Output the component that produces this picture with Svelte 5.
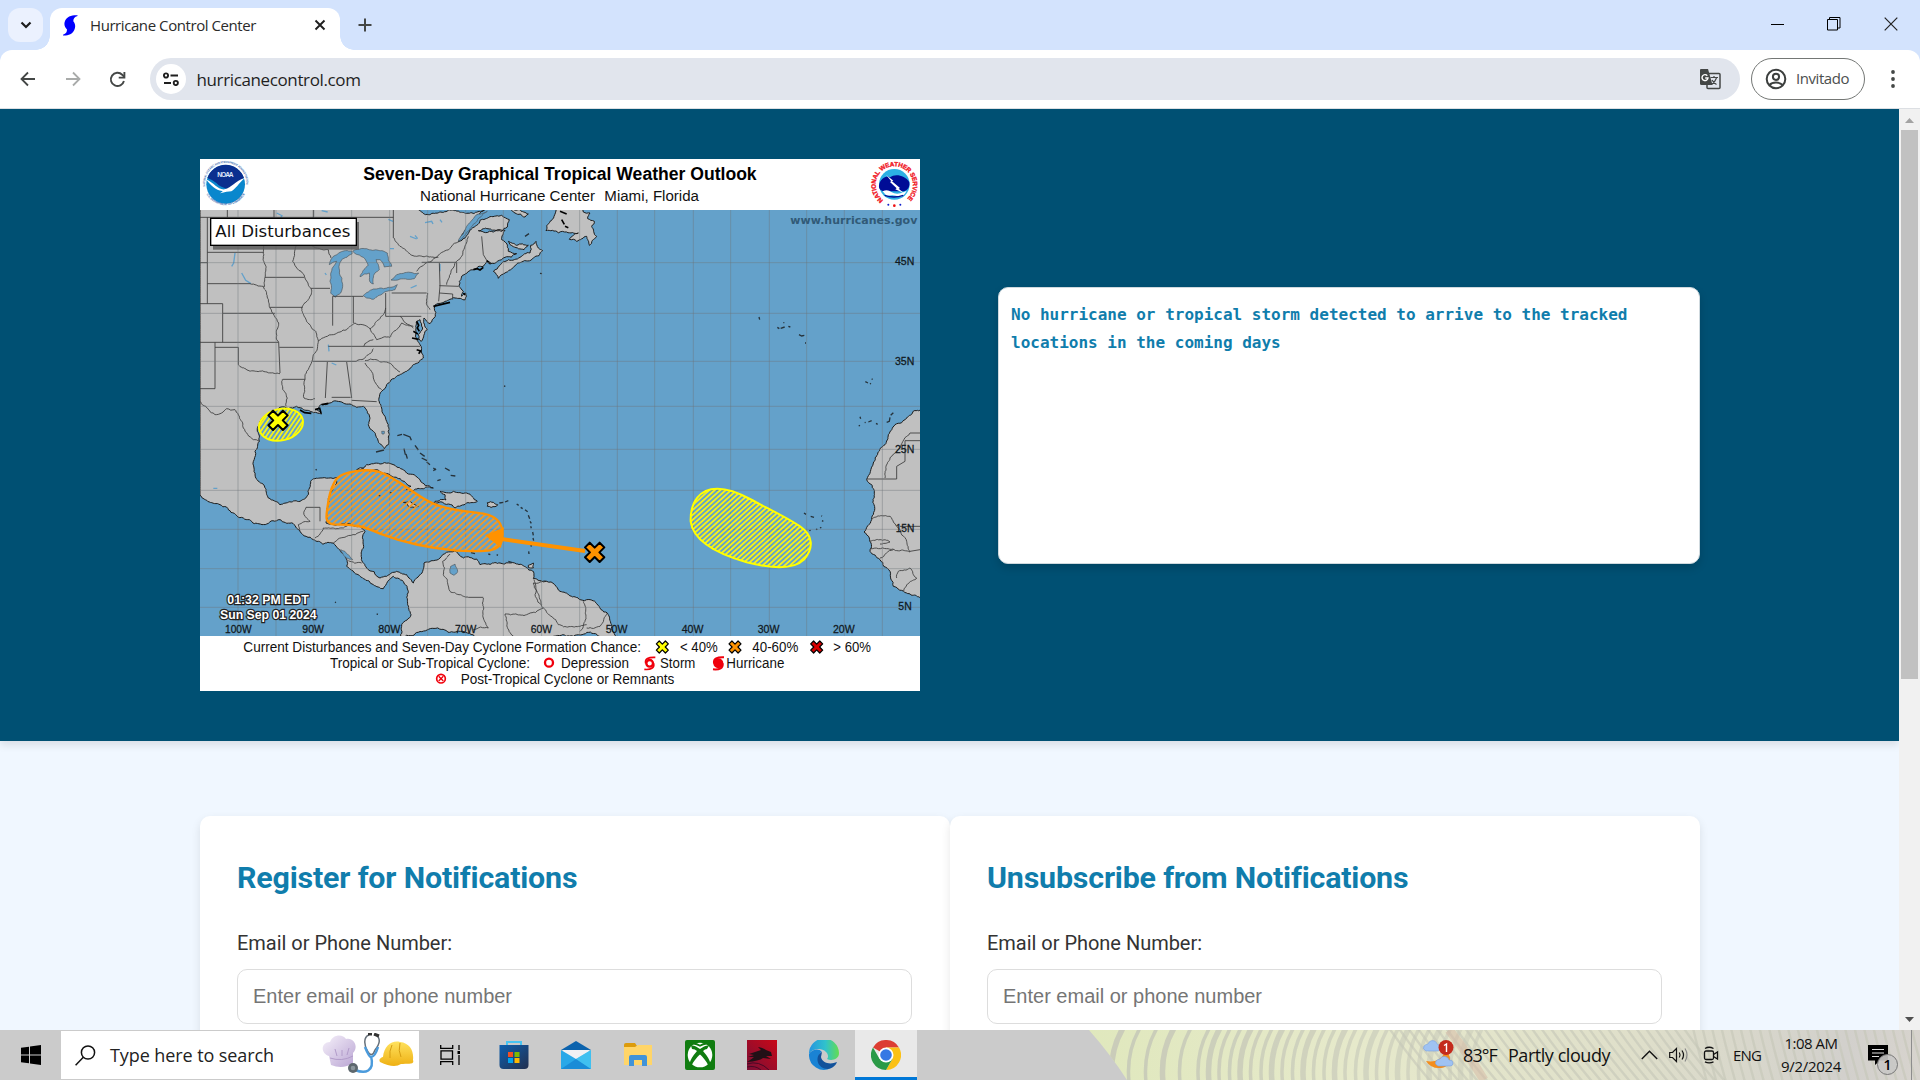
<script>
  // Stretches or tightens letter spacing so a label fills a given width.
  function fit(node, width) {
    const natural = node.getBoundingClientRect().width;
    const count = node.textContent.length;
    node.style.letterSpacing = (width - natural) / count + 'px';
  }

  let seed = 11;
  function rnd() {
    seed = (seed * 16807) % 2147483647;
    return seed / 2147483647 - 0.5;
  }

  // Midpoint displacement gives coasts and rivers their ragged edge.
  function rough(str, closed = true, amp = 0.3) {
    const pts = str.trim().split(/\s+/).map((p) => p.split(',').map(Number));
    if (closed) pts.push(pts[0]);
    const out = [pts[0]];
    const go = (a, b) => {
      const len = Math.hypot(b[0] - a[0], b[1] - a[1]);
      if (len < 7) {
        out.push(b);
        return;
      }
      const edge = (a[0] === 0 && b[0] === 0) || (a[0] === 2160 && b[0] === 2160);
      const o = edge ? 0 : rnd() * len * amp;
      const m = [
        (a[0] + b[0]) / 2 - ((b[1] - a[1]) / len) * o,
        (a[1] + b[1]) / 2 + ((b[0] - a[0]) / len) * o
      ];
      go(a, m);
      go(m, b);
    };
    for (let i = 1; i < pts.length; i++) go(pts[i - 1], pts[i]);
    return 'M' + out.map((p) => p[0].toFixed(1) + ' ' + p[1].toFixed(1)).join('L') + (closed ? 'Z' : '');
  }

  const land = [
    '0,150 862,150 830,172 808,200 790,225 775,250 795,240 815,212 840,187 870,176 905,172 928,185 922,207 905,220 850,212 835,218 880,222 915,217 905,245 922,265 925,280 950,287 915,298 870,318 862,310 850,325 820,335 795,348 778,370 777,385 790,400 785,415 797,405 796,425 765,420 735,430 706,440 703,452 706,475 690,497 680,490 672,480 682,515 664,550 655,530 668,510 660,485 650,490 648,520 652,548 660,560 665,585 670,600 640,620 620,640 590,655 560,680 545,700 537,720 545,750 560,790 568,830 565,860 553,872 535,850 520,820 505,800 508,770 490,745 470,748 450,738 430,735 390,735 362,740 350,755 365,768 340,764 310,755 290,745 240,748 205,765 180,790 172,820 178,850 165,880 162,930 175,970 205,1020 240,1040 300,1030 325,1010 332,970 360,960 412,958 400,990 385,1020 380,1070 378,1095 400,1100 450,1098 480,1105 495,1120 490,1160 485,1200 500,1230 540,1260 560,1255 590,1240 620,1250 640,1275 668,1240 672,1215 700,1208 720,1200 765,1178 790,1200 830,1203 840,1220 900,1215 950,1218 1000,1240 1000,1262 1040,1270 1080,1300 1140,1325 1190,1337 1222,1365 1235,1400 1253,1440 600,1440 605,1400 633,1370 625,1300 612,1275 580,1255 550,1292 520,1280 490,1262 440,1225 435,1190 400,1155 340,1145 300,1120 240,1085 200,1098 130,1080 60,1040 0,1012',
    '2170,752 2120,780 2085,800 2065,830 2055,860 2020,915 2000,965 2015,980 2022,1040 2015,1085 1992,1122 2008,1140 2010,1180 2040,1205 2070,1240 2080,1285 2120,1305 2170,1328',
    '1038,218 1050,190 1062,175 1072,150 1150,150 1150,162 1170,165 1163,182 1183,190 1175,205 1190,235 1168,262 1160,235 1130,250 1108,244 1135,225 1100,222 1075,225',
    '880,340 900,322 925,305 960,298 990,285 992,262 1008,250 1015,270 1028,278 1000,300 965,312 940,328 915,345 895,361',
    '925,250 950,262 985,262 972,275 940,266',
    '930,150 985,168 975,177 945,165',
    '470,935 500,920 540,918 590,927 620,945 660,965 700,990 640,998 620,995 633,985 600,962 570,950 530,935 490,932',
    '720,1000 760,1000 800,1005 832,1030 800,1035 765,1050 745,1038 700,1036 705,1030 738,1026 735,1010',
    '862,1034 880,1033 893,1040 885,1046 862,1045',
    '610,1033 630,1030 655,1045 630,1048',
    '985,1222 1000,1215 1000,1230 985,1228'
  ].map((s) => rough(s));

  const lakes = [
    '388,320 400,295 420,283 455,279 456,288 425,305 418,320 418,345 428,380 422,405 405,418 392,405 390,370 396,332 410,310',
    '458,280 500,272 535,277 562,285 575,325 553,327 540,305 528,305 538,335 525,345 520,378 510,372 508,345 480,356 495,332 505,322 490,298',
    '490,412 520,393 560,390 592,380 585,395 550,405 520,424 500,420',
    '573,366 590,350 630,343 656,345 643,362 600,363',
    '752,1225 765,1218 773,1240 762,1252 750,1245',
    '422,1175 445,1190 458,1205 440,1200',
    '775,250 815,205 840,178 862,160 835,168 800,205',
    '545,820 553,820 552,828 546,828'
  ].map((s) => rough(s, true, 0.2));

  const rivers = [
    '150,377 190,385 210,450 236,495 236,553', '190,262 190,300 195,358 192,388',
    '290,262 278,310 312,350 335,400 305,450 330,500 355,548 340,590 320,640 312,720 345,722',
    '355,548 400,530 440,515 465,495 510,512 550,470 557,450', '510,512 530,545 570,538 605,495 640,505',
    '490,565 520,545', '115,620 170,640 240,647', '247,664 262,720 258,745', '470,608 520,572', '495,615 520,660 545,695',
    '495,608 560,612 600,642', '582,240 600,265 650,295 710,298 778,250', '335,262 385,275 393,300', '650,340 690,312 715,298',
    '805,235 770,310 740,380', '0,730 45,770 80,752 105,755 130,810 160,845 178,850', '318,1048 312,1070 330,1090 295,1100 300,1120',
    '345,1140 370,1110 430,1110 450,1100', '400,1155 440,1135 490,1120', '445,1208 485,1215',
    '750,1188 728,1210 730,1250 750,1300 805,1318', '850,1320 850,1380 865,1410 820,1415', '1002,1265 1005,1310 1030,1350 980,1370 915,1368 940,1434',
    '1025,1340 1000,1275 1040,1270', '1030,1350 1075,1400 1140,1405 1160,1400', '1150,1330 1155,1390 1140,1420', '1222,1365 1200,1405 1160,1410',
    '2055,960 2070,900 2100,870 2130,825', '2015,1082 2070,1075 2095,1110 2120,1150 2130,1182 2060,1172 2010,1172', '2040,1200 2080,1175',
    '2090,1260 2095,1240 2130,1230 2150,1260 2110,1300', '2010,1150 2040,1145 2070,1152 2040,1158', '683,405 680,440 690,455', '600,475 640,510'
  ].map((s) => rough(s, false, 0.25));

  const straight =
    'M0 178H580M82 156V178M22 178V437M0 314H22M22 283H190M22 377H150M0 437H68V553M68 466H225M0 553H236L240 645M45 568H115V620M45 553V692H0M238 568H340M195 358H312M210 448H308M333 391H390M398 415V503M398 415H490M460 415V495M557 405V475H664M575 405H680M338 610H470M385 565H660M382 612L376 720M440 612L455 720M248 664H315M395 718H452M455 727L530 731M718 315L720 383L716 430M665 313H770V345M718 383L775 385M718 405L758 408V425M580 156V240M222 156V178M340 156V180M845 235L850 290L862 310M318 1048H360V1090M805 1318H850M2160 848H2115V910L2090 925V963H2000M2130 825H2160M2100 1105H2160M2130 1180L2160 1175';

  const islets =
    'M592 833l14-4 M610 829l20 8 4 10 M612 872l4 18 M618 888l4 14 M645 862l10 14 M660 885l14 10 M665 900l16 8 M680 912l10 8 M700 930l8 6 M700 938l8-6 M735 930l14 8 M752 952l14 2 M712 968l10-3 M898 1035l12-2 M915 1032l10-4 M950 1038l6 4 M962 1048l6 4 M975 1055l8 6 M985 1072l4 10 M990 1090l4 6 M992 1105l2 6 M998 1122l2 10 M999 1140l2 8 M993 1160l1 6 M986 1180l1 8 M347 934l3 3 M528 882l24-6 M536 1012l5 2 M570 1003l5 2 M405 1332l3 2 M530 1368l4 1 M1020 346l6 1 M912 684l4 1 M975 235l12-8 M813 1184l12 3 M865 1188l6 2 M890 1190l4 2 M925 1210l12 4 M1677 477l2 8 M1732 508l6 4 M1742 511l12 -4 M1750 494h3 M1765 505l6 2 M1797 530l8 4 8-2 M1815 555h3 M1996 671l8 4 M2010 678l3-2 M2015 663l3 1 M1812 1065l6 4 M1832 1075l10 3 M1864 1073l2 2 M1866 1088l4 2 M1828 1118l4-1 M1848 1113l4 2 M1860 1110l4-2 M1980 776l2 6 M1976 804l4-2 M1994 793l3 1 M2005 792l10-4 M2028 796l5 3 M2060 793l8-3 2-12 M2072 772l8-8';

  const meridians = [114, 228, 342, 455, 569, 683, 797, 910, 1025, 1139, 1252, 1364, 1480, 1592, 1708, 1820, 1933, 2047];
  const parallels = [314, 466, 610, 745, 874, 997, 1114, 1232, 1348];
  const lons = [['100W', 75, 80], ['90W', 307, 65], ['80W', 535, 66], ['70W', 765, 64], ['60W', 992, 64], ['50W', 1217, 65], ['40W', 1445, 65], ['30W', 1673, 65], ['20W', 1899, 65]];
  const lats = [['45N', 2085, 322, 58], ['35N', 2085, 620, 58], ['25N', 2085, 884, 58], ['15N', 2087, 1123, 56], ['5N', 2095, 1355, 40]];
  const cross = 'M-10-31H10V-10H31V10H10V31H-10V10H-31V-10H-10Z';
  const marks = [['#ff0', 234, 787, 1], ['#ff9200', 1184, 1183, 1], ['#ff0', 1387, 1467, 0.62], ['#ff9200', 1605, 1467, 0.62], ['#d80000', 1850, 1467, 0.62]];
  const legend = [
    ['Current Disturbances and Seven-Day Cyclone Formation Chance:', 130, 1482, 1193], ['< 40%', 1440, 1482, 113], ['40-60%', 1657, 1482, 138], ['> 60%', 1900, 1482, 113],
    ['Tropical or Sub-Tropical Cyclone:', 390, 1530, 600], ['Depression', 1083, 1530, 204], ['Storm', 1380, 1530, 106], ['Hurricane', 1579, 1530, 174],
    ['Post-Tropical Cyclone or Remnants', 782, 1578, 641]
  ];

  // Feathered wallpaper seen through the taskbar.
  const feathers = [];
  for (let i = 0; i < 32; i++) {
    const x = 20 + i * (i < 5 ? 17 : 10.5) + (i < 5 ? 0 : 34);
    feathers.push({ d: `M${x + 14} -2Q${x} 22 ${x + 3} 52`, w: i % 3 ? 3.5 : 5.5, o: 0.85 - i * 0.012 });
  }
  for (let i = 0; i < 58; i++) {
    const x = 300 + i * 9.5;
    const lean = i < 32 ? 42 : 14;
    feathers.push({ d: `M${x} -2Q${x + lean * 0.4} 22 ${x + lean} 52`, w: 2.4, o: 0.6 });
  }

  const forms = ['Register for Notifications', 'Unsubscribe from Notifications'];
  const headWidths = [340, 421];
</script>

<div class="screen">
  <div class="tabs">
    <div class="drop"><svg width="12" height="8" viewBox="0 0 12 8"><path d="M1.5 1.5 6 6l4.500-4.500" fill="none" stroke="#1c1c1c" stroke-width="2.200" /></svg></div>
    <div class="tab">
      <svg class="fav" width="15" height="21" viewBox="0 0 15 21"><path d="M14.500.2C9-.1 3.500 1.500 2 6c-1.500 4 0 6.500 2 8.500C4 17 3 18.800 0 19.700v.8c5 .3 9.500-1.500 11.300-5.500C13 11 12 8.500 10.300 6.300 10.300 3.500 11.500 1.800 14.500 1Z" fill="#00f" /></svg>
      <span class="tabname" use:fit={166}>Hurricane Control Center</span>
      <svg class="close" width="12" height="12" viewBox="0 0 12 12"><path d="m1.500 1.500 9 9m0-9-9 9" stroke="#1f1f1f" stroke-width="1.900" /></svg>
    </div>
    <svg class="plus" width="14" height="14" viewBox="0 0 14 14"><path d="M7 .5v13M.5 7h13" stroke="#444746" stroke-width="2" /></svg>
    <div class="winctl">
      <svg width="13" height="14" viewBox="0 0 13 14"><path d="M0 7.500h13" stroke="#000" /></svg>
      <svg width="14" height="14" viewBox="0 0 14 14"><path d="M.5 2.500h10v10.500H.5zM2.500 2.500V.5H13v10.500h-2.500" fill="none" stroke="#000" /></svg>
      <svg width="14" height="14" viewBox="0 0 14 14"><path d="m.7.7 12.600 12.600m0-12.600L.7 13.300" stroke="#222" stroke-width="1.200" /></svg>
    </div>
  </div>

  <div class="toolwrap">
    <div class="toolbar">
      <svg width="16" height="16" viewBox="0 0 16 16"><path d="M15 8H2M8 1.500 1.500 8 8 14.500" fill="none" stroke="#444746" stroke-width="1.800" /></svg>
      <svg class="fwd" width="16" height="16" viewBox="0 0 16 16"><path d="M1 8h13M8 1.500 14.500 8 8 14.500" fill="none" stroke="#a9abaa" stroke-width="1.800" /></svg>
      <svg class="reload" width="17" height="17" viewBox="0 0 18 18"><path d="M15.800 10.500A7 7 0 1 1 14 4l2.200 2.200" fill="none" stroke="#444746" stroke-width="2" /><path d="M16.300 1v6h-6" fill="none" stroke="#444746" stroke-width="2" /></svg>
      <div class="omni">
        <div class="site"><svg width="16" height="14" viewBox="0 0 16 14" fill="none" stroke="#1f1f1f" stroke-width="1.900"><circle cx="3" cy="3.500" r="2.100" /><path d="M7.500 3.500H15M1 11h7" /><circle cx="12.800" cy="11" r="2.100" /></svg></div>
        <span class="url" use:fit={164}>hurricanecontrol.com</span>
        <svg class="translate" width="22" height="22" viewBox="0 0 22 22"><rect x="8" y="5.500" width="13" height="15" rx="1" fill="#e1e5ed" stroke="#444746" stroke-width="1.500" /><path d="M1.500 1H9l4.500 16H2.500A1.500 1.500 0 0 1 1 15.500V2Z" fill="#444746" /><path d="M11.500 9.500H19M15 8v2m2.500 0c-1 3-3 5-5 6.500M13 12c1 2 3 3.500 4.500 4.500" fill="none" stroke="#444746" stroke-width="1.200" /><path d="M8.300 7.700A3 3 0 1 0 9 10H6.200" fill="none" stroke="#fff" stroke-width="1.400" /></svg>
      </div>
      <div class="profile">
        <svg width="22" height="22" viewBox="0 0 22 22" fill="none" stroke="#3c3f3e" stroke-width="2"><circle cx="11" cy="11" r="9.300" /><circle cx="11" cy="8.800" r="3.100" /><path d="M4.500 17c3-3.300 10-3.300 13 0" /></svg>
        <span use:fit={53}>Invitado</span>
      </div>
      <svg class="dots" width="4" height="18" viewBox="0 0 4 18" fill="#444746"><circle cx="2" cy="2" r="1.900" /><circle cx="2" cy="9" r="1.900" /><circle cx="2" cy="16" r="1.900" /></svg>
    </div>
  </div>

  <div class="view">
    <main>
      <section class="hero">
        <svg class="map" width="720" height="532" viewBox="0 3 2160 1596">
          <defs>
            <pattern id="hy" width="11" height="11" patternUnits="userSpaceOnUse" patternTransform="rotate(48)"><rect width="5.500" height="11" fill="#f4f21a" /></pattern>
            <pattern id="ho" width="13" height="13" patternUnits="userSpaceOnUse" patternTransform="rotate(48)"><rect width="5.500" height="13" fill="#f29a28" /></pattern>
            <clipPath id="sea"><rect x="0" y="156" width="2160" height="1278" /></clipPath>
            <path id="ringA" d="M16 88A62 62 0 1 1 138 88" />
            <path id="ringB" d="M13 92A66 66 0 0 0 141 92" />
            <path id="ringC" d="M2050 126A56 56 0 1 1 2116 126" />
          </defs>
          <rect width="2160" height="1602" fill="#fff" />
          <g clip-path="url(#sea)">
            <rect y="156" width="2160" height="1278" fill="#64a1ca" />
            {#each land as d}<path {d} fill="#c0c0c0" stroke="#1c1c1c" stroke-width="3" />{/each}
            {#each lakes as d}<path {d} fill="#64a1ca" stroke="#4b565d" stroke-width="2" />{/each}
            <path d="M230 165l16 8-6 10M365 158l18 4M565 184l14 6M675 194l20-4 4 8M720 185l6 8M630 235l20 8M645 232l8 10M105 285l-4 30-6 10M125 345l12 22 16 10M375 345l4 6M570 272h12M720 318v22M385 560l2 20M395 615l14 6M40 991h12M632 390l18-8M780 158l18 4" fill="none" stroke="#64a1ca" stroke-width="4" />
            <g fill="none" stroke="#3c3c3c" stroke-width="2.600"><path d={straight} />{#each rivers as d}<path {d} />{/each}</g>
            <path d={islets} stroke="#26323a" stroke-width="4" fill="none" />
            <path d="M820 335l12-3 8 4 10-8M790 405l6 6M700 445l50-12M650 490l6 12-4 8 6 10M640 520l14 8M636 540l20 4M650 575l12 4-6 8M300 756l14 8 20 2M345 755l14-4 4 14M365 740l20-4M860 308l12 8M1080 160l20 8M1085 185l8 14M1095 205l10 4" fill="none" stroke="#000" stroke-width="5" />
            <g stroke="#6e7478" stroke-opacity=".5" stroke-width="2.600">
              {#each meridians as x}<path d="M{x} 156V1434" />{/each}
              {#each parallels as y}<path d="M0 {y}H2160" />{/each}
            </g>
            <ellipse cx="243" cy="800" rx="67" ry="47" transform="rotate(-14 243 800)" fill="url(#hy)" stroke="#ff0" stroke-width="6" />
            <path d="M410 962C432 938 500 932 535 941C590 957 640 1010 700 1037C750 1059 800 1059 850 1067C900 1075 915 1110 905 1150C895 1185 850 1180 770 1178C680 1170 600 1150 540 1127C490 1104 470 1100 400 1099C370 1094 380 1070 385 1030C390 1000 395 982 410 962Z" fill="url(#ho)" stroke="#ff9200" stroke-width="7" />
            <path d="M890 1141 1155 1179" stroke="#ff9200" stroke-width="12" />
            <path d="M855 1132 912 1108 903 1170Z" fill="#ff9200" />
            <path d="M1553 992C1500 991 1470 1031 1472 1091C1480 1151 1560 1190 1640 1213C1720 1233 1782 1235 1812 1205C1842 1170 1840 1132 1800 1105C1760 1078 1700 1050 1650 1023C1610 1001 1580 992 1553 992Z" fill="url(#hy)" stroke="#ff0" stroke-width="6" />
            <text class="sans" x="1771" y="199" textLength="381" lengthAdjust="spacingAndGlyphs" font-size="34" font-weight="700" fill="#315a77">www.hurricanes.gov</text>
            <g class="arial axis" font-size="35">
              {#each lats as [t, x, y, w]}<text {x} {y} textLength={w} lengthAdjust="spacingAndGlyphs">{t}</text>{/each}
              {#each lons as [t, x, w]}<text {x} y="1424" textLength={w} lengthAdjust="spacingAndGlyphs">{t}</text>{/each}
            </g>
            <g class="arial stamp" font-size="38" font-weight="700"><text x="82" y="1339" textLength="244" lengthAdjust="spacingAndGlyphs">01:32 PM EDT</text><text x="60" y="1383" textLength="290" lengthAdjust="spacingAndGlyphs">Sun Sep 01 2024</text></g>
            <rect x="39" y="192" width="438" height="83" fill="#5c5c5c" opacity=".85" />
            <rect x="32" y="181" width="437" height="81" fill="#fff" stroke="#000" stroke-width="4" />
            <text class="sans" x="46" y="236" textLength="405" lengthAdjust="spacingAndGlyphs" font-size="50" fill="#111">All Disturbances</text>
          </g>
          <g class="arial">
            <text x="490" y="67" textLength="1180" lengthAdjust="spacingAndGlyphs" font-size="54" font-weight="700">Seven-Day Graphical Tropical Weather Outlook</text>
            <text x="660" y="128" textLength="525" lengthAdjust="spacingAndGlyphs" font-size="46" fill="#111">National Hurricane Center</text>
            <text x="1213" y="128" textLength="284" lengthAdjust="spacingAndGlyphs" font-size="46" fill="#111">Miami, Florida</text>
            {#each legend as [t, x, y, w]}<text {x} y={y - 1} textLength={w} lengthAdjust="spacingAndGlyphs" font-size="42" fill="#111">{t}</text>{/each}
          </g>
          {#each marks as [c, x, y, s]}<path d={cross} transform="translate({x} {y}) rotate(45) scale({s})" fill={c} stroke="#000" stroke-width={s < 1 ? 6 : 6} stroke-linejoin="round" />{/each}
          <circle cx="1047" cy="1514" r="12" fill="none" stroke="#f0000c" stroke-width="7" />
          <circle cx="723" cy="1562" r="13" fill="none" stroke="#f0000c" stroke-width="5" />
          <path d="m716 1555 14 14m0-14-14 14" stroke="#f0000c" stroke-width="4" />
          <circle cx="1349" cy="1516" r="10" fill="none" stroke="#f0000c" stroke-width="7" />
          <path d="M1337 1516C1334 1502 1345 1497 1366 1498M1361 1516C1364 1530 1353 1536 1333 1534" fill="none" stroke="#f0000c" stroke-width="5" />
          <circle cx="1555" cy="1516" r="15" fill="#f0000c" />
          <path d="M1542 1516C1540 1502 1551 1497 1572 1498M1568 1516C1570 1530 1559 1536 1539 1534" fill="none" stroke="#f0000c" stroke-width="6" />

          <g>
            <circle cx="77" cy="79" r="58" fill="#0a87cd" />
            <path d="M22 60A58 58 0 0 1 132 60C112 72 100 84 88 95Q60 88 50 76Q40 66 22 60Z" fill="#0b2f8f" />
            <path d="M18 64C45 76 52 96 74 94C95 90 105 68 134 60C116 76 108 92 94 100Q82 100 60 106Q72 98 66 99C48 98 30 80 18 64Z" fill="#fff" />
            <text class="arial" x="52" y="57" textLength="49" font-size="20" font-weight="700" fill="#dfe8fa">NOAA</text>
            <text class="arial" font-size="9" font-weight="700" fill="#3768ad"><textPath href="#ringA" startOffset="3" textLength="205" lengthAdjust="spacingAndGlyphs">NATIONAL OCEANIC AND ATMOSPHERIC ADMINISTRATION</textPath></text>
            <text class="arial" font-size="9" font-weight="700" fill="#3768ad"><textPath href="#ringB" startOffset="18" textLength="140" lengthAdjust="spacingAndGlyphs">U.S. DEPARTMENT OF COMMERCE</textPath></text>
          </g>
          <g>
            <circle cx="2083" cy="79" r="46" fill="#2cb0e4" />
            <path d="M2037 82C2040 62 2060 50 2070 58C2085 46 2115 52 2128 72C2130 86 2124 96 2112 100H2050C2040 96 2036 92 2037 82Z" fill="#000c96" />
            <path d="M2058 50 2080 68 2076 70 2100 90 2096 92 2112 106 2086 94 2090 91 2070 72 2074 70Z" fill="#fff" />
            <path d="M2048 100Q2062 92 2074 102Q2090 112 2112 102L2120 98Q2112 116 2098 116Q2080 108 2060 114Z" fill="#fff" /><path d="M2054 112Q2082 122 2110 112" stroke="#000c96" stroke-width="4" fill="none" />
            <text class="arial" font-size="19" font-weight="700" fill="#f0141e" stroke="#f0141e"><textPath href="#ringC" textLength="274">NATIONAL WEATHER SERVICE</textPath></text>
            <circle cx="2065" cy="140" r="3" fill="#12c" /><circle cx="2083" cy="143" r="4" fill="#e11" /><circle cx="2101" cy="140" r="3" fill="#12c" />
          </g>
        </svg>
        <div class="notice">No hurricane or tropical storm detected to arrive to the tracked locations in the coming days</div>
      </section>
      <section class="forms">
        {#each forms as title, i}
          <form>
            <h2><span use:fit={headWidths[i]}>{title}</span></h2>
            <label for="contact{i}"><span use:fit={215}>Email or Phone Number:</span></label>
            <input id="contact{i}" placeholder="Enter email or phone number" />
          </form>
        {/each}
      </section>
    </main>
    <div class="scroll">
      <svg width="21" height="21" viewBox="0 0 21 21"><path d="m6 14 4.500-5 4.500 5Z" fill="#a3a3a3" /></svg>
      <div class="thumb"></div>
      <svg width="21" height="21" viewBox="0 0 21 21"><path d="m6 8 4.500 5L15 8Z" fill="#505050" /></svg>
    </div>
  </div>

  <div class="taskbar">
    <div class="start"><svg width="20" height="20" viewBox="0 0 20 20"><path d="M0 2.800 8 1.700v7.800H0zM9 1.500 20 0v9.500H9zM0 10.500h8v7.800L0 17.200zM9 10.500h11V20L9 18.500z" /></svg></div>
    <div class="search">
      <svg width="21" height="21" viewBox="0 0 21 21" fill="none" stroke="#111" stroke-width="1.500"><circle cx="13" cy="7.500" r="6.600" /><path d="M8.300 12.300.6 20.200" /></svg>
      <span use:fit={164}>Type here to search</span>
      <svg class="jobs" width="92" height="44" viewBox="0 0 92 44">
        <defs><linearGradient id="hat" x2="1" y2="1"><stop stop-color="#f6f1fa" /><stop offset="1" stop-color="#b9a4d3" /></linearGradient><linearGradient id="helm" x2="0" y2="1"><stop stop-color="#ffe25e" /><stop offset="1" stop-color="#eeb013" /></linearGradient></defs>
        <path d="M9 32 7 23C-2 20-1 9 8 9C11 1 21 1 24 6C32 4 37 14 31 20L31 30Q21 37 9 32Z" fill="url(#hat)" /><path d="M8 25q12 4 23-2M13 16l2 7M20 17v6M27 15l-2 7" stroke="#b29cca" fill="none" />
        <path d="M47 2C41 4 42 13 46 19Q50 25 53 17Q61 7 54 2" fill="none" stroke="#66707a" stroke-width="1.500" /><path d="M43 14Q47 24 49 24Q53 24 56 14M49 23C53 39 43 41 33 37" fill="none" stroke="#4b9bdc" stroke-width="2.500" /><path d="M46 1h4m2 0 5 2" stroke="#333" stroke-width="3" /><circle cx="31" cy="35" r="5" fill="#5d676d" /><circle cx="31" cy="35" r="2.300" fill="#8b969c" />
        <path d="M58 29C56 26 60 24 61 24C62 13 70 7 78 9C88 10 92 18 91 27C93 32 85 30 79 31Q72 36 58 29Z" fill="url(#helm)" /><path d="M70 12q-3 6-2 13M78 10q-2 8 1 14" fill="none" stroke="#d59d12" />
      </svg>
    </div>
    <div class="cell task"><svg width="20" height="20" viewBox="0 0 20 20" fill="none" stroke="#000" stroke-width="1.300"><path d="M.7 0v3.300h12V0M.7 20v-3.300h12V20M1 5.800h11.500v8.400H1zM19 0v5M19 10v10" /><path d="M17.500 6h3v3h-3z" fill="#000" stroke="none" /></svg></div>
    <div class="cell"><svg width="30" height="30" viewBox="0 0 30 30"><defs><linearGradient id="st" x2="1" y2="1"><stop stop-color="#0d5fae" /><stop offset="1" stop-color="#23304f" /></linearGradient></defs><path d="M8 6V2h14v4" fill="none" stroke="#48c4f2" stroke-width="2" /><path d="M.5 5h29v20q0 4-4 4h-21q-4 0-4-4Z" fill="url(#st)" /><path d="M9 12h5v5H9z" fill="#f25022" /><path d="M15.500 12h5v5h-5z" fill="#7fba00" /><path d="M9 18h5v5H9z" fill="#00a4ef" /><path d="M15.500 18h5v5h-5z" fill="#ffb900" /></svg></div>
    <div class="cell"><svg width="30" height="30" viewBox="0 0 30 30"><path d="M0 10 15 1l15 9H0Z" fill="#0c63ad" /><path d="M2 10h26v10H2z" fill="#f1f1f4" /><path d="M0 10v19h30V10L15 19Z" fill="#2aa8e8" /><path d="m0 29 15-10 15 10Z" fill="#1683d2" opacity=".75" /><path d="M30 10 15 19l15 10Z" fill="#50d0f5" opacity=".6" /></svg></div>
    <div class="cell"><svg width="30" height="30" viewBox="0 0 30 30"><path d="M1 5q0-2 2-2h9l2 3v4H1Z" fill="#dc9b0b" /><path d="M1 7h11l3-2h14v20H1Z" fill="#ffd568" /><path d="M6 26V17q0-2 2-2h14q2 0 2 2v9h-5v-6h-8v6Z" fill="#4193d8" /></svg></div>
    <div class="cell"><svg width="30" height="30" viewBox="0 0 30 30"><rect width="30" height="30" rx="2" fill="#107c10" /><circle cx="15" cy="15" r="12.300" fill="#fff" /><path d="M6 5.500C9 5 12 7 15 9C18 7 21 5 24 5.500L22 9Q20 9 18 11Q25 19 25.500 24L23.500 26C22 22 18 17 15 14.500C12 17 8 22 6.500 26L4.500 24Q5 19 12 11Q10 9 7 9Z" fill="#107c10" /><path d="M8.500 3.500Q12 4 15 5.700Q18 4 21.500 3.500" fill="none" stroke="#107c10" stroke-width="1.800" /></svg></div>
    <div class="cell"><svg width="30" height="30" viewBox="0 0 30 30"><defs><linearGradient id="dr" x1="1" x2="0" y2="1"><stop stop-color="#c80818" /><stop offset="1" stop-color="#7b0f36" /></linearGradient></defs><path d="M0 0h30v30H0z" fill="url(#dr)" /><path d="M2 14Q8 12 14 10L11 7Q17 8 19 10L24 12 25 16 19 16 24 19 16 18Q12 21 0 22Q5 19 7 17L1 17 7 15Z" fill="#211016" /><path d="M0 24Q12 20 22 30M0 27Q8 25 14 30" fill="none" stroke="#470a25" /></svg></div>
    <div class="cell"><svg width="30" height="30" viewBox="0 0 30 30"><defs><linearGradient id="eg"><stop stop-color="#2595e0" /><stop offset=".55" stop-color="#30c2cc" /><stop offset="1" stop-color="#64dd50" /></linearGradient></defs><path d="M0 14A15 15 0 0 1 30 13C30 20 22 21 18 19C19 18 20 15 17 12C12 7 3 9 0 14Z" fill="url(#eg)" /><path d="M0 14C3 9 10 8 13 12C9 12 8 25 22 28A15 15 0 0 1 0 14Z" fill="#1a83d4" /><path d="M13 12C5 16 8 29 19 29C24 28 27 25 28 22C21 25 13 23 12 17Z" fill="#12529b" /></svg></div>
    <div class="cell active"><svg width="30" height="30" viewBox="0 0 30 30"><path d="M15 15 2 7.500A15 15 0 0 1 28 7.500H15Z" fill="#dc3e32" /><path d="M15 15V7.500h13A15 15 0 0 1 15 30l6.500-11.200Z" fill="#fbc116" /><path d="M15 15 21.500 18.800 15 30A15 15 0 0 1 2 7.500L8.500 18.800Z" fill="#2b9a47" /><circle cx="15" cy="15" r="7.500" fill="#fff" /><circle cx="15" cy="15" r="5.800" fill="#3678e4" /></svg></div>
    <div class="tray">
      <svg class="paper" width="840" height="50" viewBox="0 0 840 50">
        <defs><linearGradient id="pg"><stop stop-color="#e0e8bd" /><stop offset=".32" stop-color="#e6e9cb" /><stop offset=".65" stop-color="#dfdfca" /><stop offset=".9" stop-color="#d2d0cc" /><stop offset="1" stop-color="#d8d4ce" /></linearGradient><clipPath id="pc"><path d="M0 0H840V50H38Q22 25 0 0Z" /></clipPath></defs>
        <g clip-path="url(#pc)">
          <rect width="840" height="50" fill="url(#pg)" />
          {#each feathers as f}<path d={f.d} fill="none" stroke="#c5c7b8" stroke-width={f.w} stroke-opacity={f.o} />{/each}
          <path d="M360 0Q380 25 395 50" stroke="#d6b8a4" stroke-width="9" opacity=".5" fill="none" />
        </g>
      </svg>
      <div class="weather">
        <svg width="31" height="30" viewBox="0 0 31 30"><path d="M3 21C13 23 20 18 22 11C30 15 28 27 18 28Q8 29 3 21Z" fill="#f48e1d" /><path d="M3 11Q-1 9 1 6Q3 4 5 4C7-1 13 0 14 4Q18 5 18 8 17 11 15 11ZM15 26q-4-2-2-5 2-2 4-2c2-4 8-3 9 1q4 0 4 3 0 3-3 3Z" fill="#9fc2f2" stroke="#7aa3df" stroke-width=".6" /><circle cx="23" cy="7.500" r="7.500" fill="#c42b1c" /><path d="M21 5.500 23.500 4v8" fill="none" stroke="#fff" stroke-width="1.400" /></svg>
        <span class="deg" use:fit={34}>83°F</span><span use:fit={102}>Partly cloudy</span>
      </div>
      <svg class="chev" width="17" height="10" viewBox="0 0 17 10"><path d="m.8 9 7.700-7.700L16.200 9" fill="none" stroke="#111" stroke-width="1.400" /></svg>
      <svg class="vol" width="20" height="16" viewBox="0 0 20 16" fill="none" stroke="#111" stroke-width="1.200"><path d="M.7 5.500h2.800L7.500 1.500v13l-4-4H.7zM10.300 5.500q1.500 2.500 0 5M13 3.500q3 4.500 0 9" /><path d="M16 1.500q4 6.500 0 13" stroke="#888" /></svg>
      <svg class="meet" width="16" height="18" viewBox="0 0 16 18" fill="none" stroke="#111" stroke-width="1.300"><rect x="1.500" y="5" width="9" height="8.500" rx="1.500" /><path d="m10.500 8.500 4-2.500v7l-4-2.500M2 2.500Q6 0 10.500 2.500M2 15.800q4 2 8.500 0" /></svg>
      <span class="lang"><span use:fit={28}>ENG</span></span>
      <div class="clock"><span use:fit={53}>1:08 AM</span><span use:fit={60}>9/2/2024</span></div>
      <div class="note">
        <svg width="31" height="32" viewBox="0 0 31 32"><path d="M0 0h20v15.500H12L7 20v-4.500H0z" /><path d="M4 4.500h12M4 8h12M4 11.500h7" stroke="#ddd" stroke-width="1.200" /><circle cx="19.500" cy="19.500" r="10" fill="#c9c8c6" fill-opacity=".9" stroke="#777" /><text class="segoe" x="15.500" y="25" font-size="14" font-weight="600">1</text></svg>
      </div>
      <div class="peek"></div>
    </div>
  </div>
</div>

<style>
  :global(body) { margin: 0; overflow: hidden; }
  * { box-sizing: border-box; }
  svg { display: block; flex: none; }
  span { display: inline-block; white-space: pre; }
  .screen { width: 1920px; height: 1080px; display: flex; flex-direction: column; overflow: hidden; background: #fff; font-family: 'Open Sans', sans-serif; }
  .tabs { height: 50px; flex: none; background: #d3e3fd; display: flex; align-items: center; padding-left: 8px; }
  .drop { width: 35px; height: 34px; border-radius: 12px; background: #ebf1fe; display: flex; align-items: center; justify-content: center; }
  .tab { position: relative; width: 290px; height: 42px; margin: 8px 0 0 7px; padding-left: 13px; background: #fff; border-radius: 12px 12px 0 0; display: flex; align-items: center; }
  .tab::before, .tab::after { content: ''; position: absolute; bottom: 0; width: 14px; height: 14px; }
  .tab::before { left: -14px; background: radial-gradient(circle at 0 0, #0000 13.5px, #fff 14px); }
  .tab::after { right: -14px; background: radial-gradient(circle at 100% 0, #0000 13.5px, #fff 14px); }
  .fav { margin-bottom: 8px; }
  .tabname { margin: 0 auto 8px 12px; font-size: 15px; line-height: 20px; color: #2b2b2b; }
  .close { margin: 0 14px 8px 0; }
  .plus { margin-left: 18px; }
  .winctl { margin: 0 22px 2px auto; display: flex; gap: 43px; }
  .toolwrap { height: 59px; flex: none; background: #d3e3fd; }
  .toolbar { height: 59px; background: #fff; border-bottom: 1px solid #dcdfe3; border-radius: 12px 12px 0 0; display: flex; align-items: center; padding-left: 20px; }
  .fwd { margin-left: 29px; }
  .reload { margin-left: 28px; }
  .omni { width: 1590px; height: 42px; margin-left: 24px; padding: 0 19px 0 6px; border-radius: 21px; background: #e1e5ed; display: flex; align-items: center; }
  .site { width: 30px; height: 30px; border-radius: 50%; background: #fff; display: flex; align-items: center; justify-content: center; }
  .url { margin-left: 10.5px; font-size: 17px; color: #1f1f1f; }
  .translate { margin-left: auto; }
  .profile { width: 114px; height: 42px; margin-left: 11px; padding-left: 13px; border: 1px solid #747775; border-radius: 21px; display: flex; align-items: center; font-size: 15px; color: #4c4f4e; }
  .profile span { margin: 0 0 2px 9px; }
  .dots { margin-left: 26px; }
  .view { height: 921px; flex: none; display: flex; }
  main { width: 1899px; height: 921px; overflow: hidden; background: #f0f7ff; }
  .hero { position: relative; height: 632px; background: #005073; display: flex; align-items: center; padding-left: 200px; gap: 78px; box-shadow: 0 4px 8px rgba(0, 0, 0, .1); }
  .notice { width: 702px; height: 277px; padding: 13px 12px; border: 1px solid #cfd9de; border-radius: 10px; background: #fff; box-shadow: 0 4px 8px rgba(0, 0, 0, .15); color: #107dac; font: 700 16px/28px 'DejaVu Sans Mono', monospace; }
  .forms { display: flex; padding: 75px 199px 0 200px; }
  form { width: 750px; height: 300px; padding: 44px 38px 0 37px; background: #fff; border-radius: 10px 10px 0 0; box-shadow: 0 4px 10px rgba(0, 0, 0, .1); font-family: Roboto, sans-serif; display: flex; flex-direction: column; }
  h2 { margin: 0 0 29px; font-size: 30.4px; line-height: 36px; font-weight: 700; color: #107dac; }
  label { font-size: 20px; line-height: 36px; color: #333; margin-bottom: 8px; }
  input { width: 675px; height: 55px; padding: 0 15px 1px; border: 1px solid #ddd; border-radius: 10px; font: 20px 'Liberation Sans', Arial, sans-serif; background: #fff; }
  input::placeholder { color: #757575; opacity: 1; }
  .scroll { width: 21px; background: #f1f1f1; display: flex; flex-direction: column; }
  .thumb { width: 17px; height: 549px; margin: 0 2px auto; background: #c1c1c1; }
  .arial { font-family: 'Liberation Sans', Arial, sans-serif; }
  .sans { font-family: 'DejaVu Sans', sans-serif; }
  .segoe { font-family: 'Open Sans', sans-serif; }
  .axis { fill: #101820; stroke: #101820; stroke-width: .8px; }
  .stamp { fill: #fff; stroke: #222; stroke-width: 7px; paint-order: stroke; }
  .taskbar { height: 50px; flex: none; background: #cbcbcb; display: flex; }
  .start { width: 61px; flex: none; display: flex; align-items: center; justify-content: center; }
  .search { width: 358px; flex: none; height: 48px; margin-top: 1px; padding: 0 5px 0 14px; background: #fff; display: flex; align-items: center; font-size: 18px; color: #222; }
  .search span { margin-left: 14px; }
  .jobs { margin: 0 0 0 auto; }
  .cell { width: 62px; flex: none; display: flex; align-items: center; justify-content: center; }
  .task { width: 64px; padding-right: 3px; }
  .active { background: #e9e9e9; border-bottom: 3px solid #0078d7; padding-top: 3px; }
  .tray { position: relative; flex: 1; min-width: 0; display: flex; align-items: center; padding-left: 506px; color: #111; }
  .tray > * { position: relative; flex: none; }
  .tray > .paper { position: absolute; left: 172px; top: 0; }
  .weather { display: flex; align-items: center; width: 201px; font-size: 18px; }
  .deg { margin: 0 11px 0 9px; }
  .chev { margin-left: 17px; }
  .vol { margin-left: 11px; }
  .meet { margin-left: 14px; }
  .lang { width: 28px; margin-left: 14px; font-size: 15px; }
  .clock { width: 62px; margin-left: 19px; display: flex; flex-direction: column; align-items: center; font-size: 15px; line-height: 23px; }
  .note { margin: 12px 0 0 26px; }
  .peek { width: 1px; height: 50px; margin-left: 12px; background: #8d8d8d; }
</style>
